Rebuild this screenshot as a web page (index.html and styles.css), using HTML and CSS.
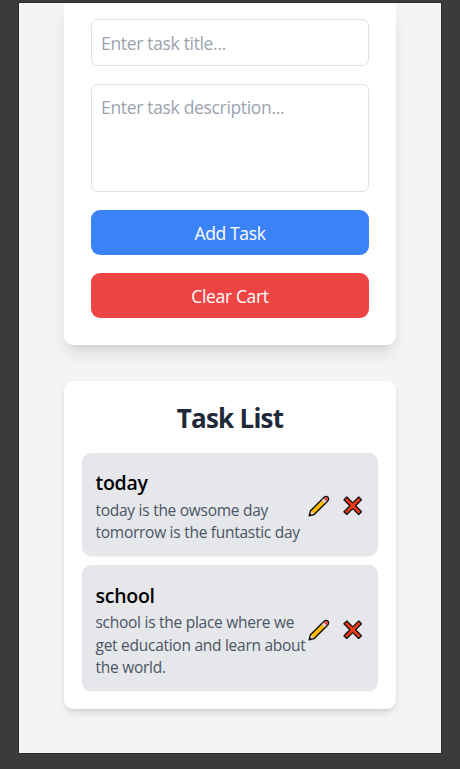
FILE: index.html
```html
<!DOCTYPE html>
<html lang="en">
<head>
<meta charset="utf-8">
<title>Task List</title>
<link rel="stylesheet" href="styles.css">
</head>
<body>
<svg class="sprite" aria-hidden="true">
  <symbol id="pencil" viewBox="0 0 22 22">
    <path d="M1.2 20.8 2.5 15.8 15.6 2.7Q17.7.6 19.9 2.1 21.4 4.3 19.3 6.4L6.2 19.5Z" fill="#ffb900" stroke="#111" stroke-width="1.4" stroke-linejoin="round"/>
    <path d="m13.7 5.6 2.3-2.3 2.7 2.700-2.300 2.300Z" fill="#d8d5dc"/>
    <path d="m15.700 3.600.8-.8q1.500-1.100 2.800 0 1.100 1.400 0 2.800l-.8.8Z" fill="#e74856"/>
    <path d="m2.100 19.900 1.200-3.800 2.600 2.600Z" fill="#e8cdbd"/>
    <path d="m1.600 20.400.6-2 1.400 1.400Z" fill="#111"/>
  </symbol>
  <symbol id="cross" viewBox="0 0 20 20">
    <path d="m3.900 1 6.100 6.100L16.100 1 19 3.900 12.900 10l6.100 6.100-2.900 2.900-6.100-6.100L3.900 19 1 16.100 7.100 10 1 3.900Z" fill="#f03a17" stroke="#111" stroke-width="1.300" stroke-linejoin="round"/>
  </symbol>
</svg>
<main class="page">
  <form class="card form-card">
    <input class="field" type="text" placeholder="Enter task title...">
    <textarea class="field area" placeholder="Enter task description..."></textarea>
    <button class="button add" type="button">Add Task</button>
    <button class="button clear" type="button">Clear Cart</button>
  </form>
  <section class="card list-card">
    <h2 class="heading">Task List</h2>
    <ul class="tasks">
      <li class="task">
        <div class="task-text">
          <h3 class="task-title">today</h3>
          <p class="task-description">today is the owsome day<br>tomorrow is the funtastic day</p>
        </div>
        <div class="actions">
          <button class="icon-button" type="button"><svg class="pencil"><use href="#pencil"/></svg></button>
          <button class="icon-button" type="button"><svg class="cross"><use href="#cross"/></svg></button>
        </div>
      </li>
      <li class="task">
        <div class="task-text">
          <h3 class="task-title">school</h3>
          <p class="task-description">school is the place where we<br>get education and learn about<br>the world.</p>
        </div>
        <div class="actions">
          <button class="icon-button" type="button"><svg class="pencil"><use href="#pencil"/></svg></button>
          <button class="icon-button" type="button"><svg class="cross"><use href="#cross"/></svg></button>
        </div>
      </li>
    </ul>
  </section>
</main>
</body>
</html>
```
FILE: styles.css
```css
* { box-sizing: border-box; margin: 0; padding: 0; }
body {
  height: 769px;
  overflow: hidden;
  padding: 3px 19px 16px;
  background: #3b3b3b;
  font-family: "Open Sans", "Noto Sans", sans-serif;
}
.sprite { display: none; }
.page {
  width: 422px;
  height: 750px;
  padding: 0 45px;
  overflow: hidden;
  background: #f3f4f6;
  outline: 1px solid #292c30;
}
.card { background: #fff; }
.form-card {
  display: flex;
  flex-direction: column;
  gap: 18px;
  height: 341.5px;
  padding: 16px 27px 27px;
  border-radius: 0 0 9px 9px;
  box-shadow: 0 11px 17px -3px rgb(0 0 0 / .1), 0 4.5px 7px -4px rgb(0 0 0 / .1);
}
.field {
  flex: none;
  width: 100%;
  height: 46.5px;
  padding: 10px 9px 8px;
  border: 1px solid #dfe1e5;
  border-radius: 6.75px;
  background: #fff;
  font: 17.5px/27px "Open Sans", sans-serif;
  letter-spacing: -.33px;
}
.area { height: 108px; padding-top: 9px; resize: none; }
.field::placeholder { color: #9ca3af; opacity: 1; }
.button {
  height: 45px;
  padding-top: 2px;
  border: 0;
  border-radius: 9px;
  color: #fff;
  font: 17.5px/27px "Open Sans", sans-serif;
  letter-spacing: -.35px;
}
.add { background: #3b82f6; }
.clear { background: #ef4444; }
.list-card {
  height: 328.5px;
  margin-top: 36px;
  padding: 18px;
  border-radius: 9px;
  box-shadow: 0 4.5px 7px -1px rgb(0 0 0 / .1), 0 2px 4px -2px rgb(0 0 0 / .1);
}
.heading {
  height: 36px;
  padding-top: 1px;
  margin-bottom: 18px;
  color: #1f2937;
  font-size: 26px;
  letter-spacing: -.75px;
  font-weight: 700;
  line-height: 36px;
  text-align: center;
}
.tasks { display: flex; flex-direction: column; gap: 9px; list-style: none; }
.task {
  display: flex;
  align-items: center;
  justify-content: space-between;
  padding: 13.5px;
  border-radius: 9px;
  background: #e5e7eb;
  box-shadow: 0 1px 2px rgb(0 0 0 / .05);
}
.task-text { width: 212px; white-space: nowrap; }
.task-title {
  height: 31.5px;
  padding-top: 1px;
  font-size: 19.5px;
  font-weight: 600;
  line-height: 31.5px;
  letter-spacing: -.25px;
}
.task-description {
  padding-top: 1px;
  margin-bottom: -1px;
  color: #4b5563;
  font-size: 15.5px;
  line-height: 22.5px;
  letter-spacing: -.27px;
}
.actions { display: flex; align-items: center; gap: 13px; padding: 3px 2px 0 0; }
.icon-button { display: flex; border: 0; background: none; }
.pencil { width: 22px; height: 22px; }
.cross { width: 19.5px; height: 19.5px; }
```
